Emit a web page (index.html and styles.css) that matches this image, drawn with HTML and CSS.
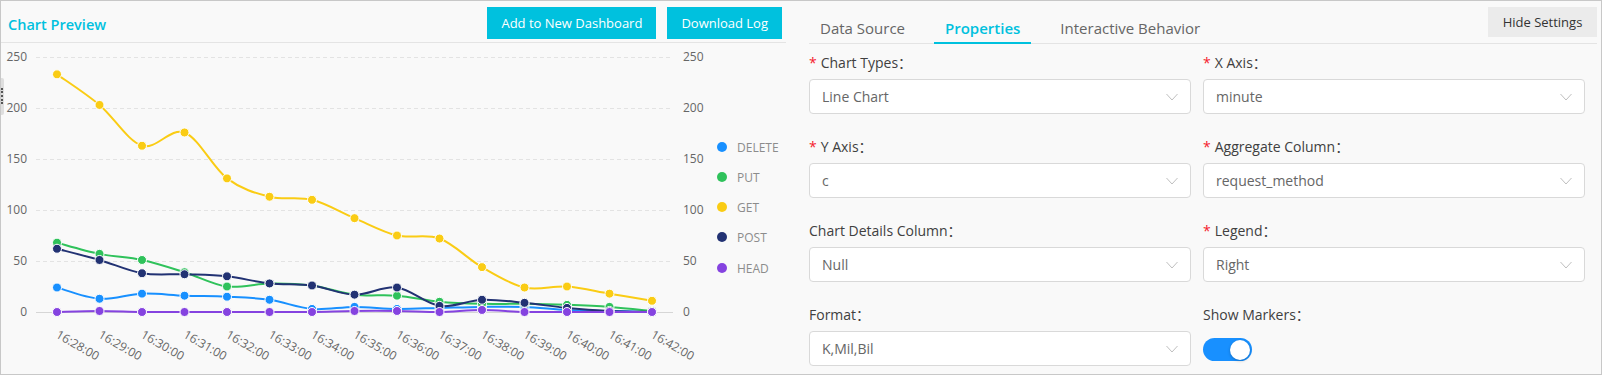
FILE: index.html
```html
<!DOCTYPE html>
<html>
<head>
<meta charset="utf-8">
<link rel="stylesheet" href="styles.css">
</head>
<body>
<div class="frame">
  <section class="preview">
    <header class="preview-head">
      <h2 class="title">Chart Preview</h2>
      <div class="actions">
        <button class="btn primary">Add to New Dashboard</button>
        <button class="btn primary">Download Log</button>
      </div>
    </header>
    <div class="chart">
      <svg class="chart-svg" width="785" height="331" viewBox="1 43 785 331" xmlns="http://www.w3.org/2000/svg">
        <g class="grid">
          <line x1="36" x2="673" y1="57.5" y2="57.5"/>
          <line x1="36" x2="673" y1="108.5" y2="108.5"/>
          <line x1="36" x2="673" y1="159.5" y2="159.5"/>
          <line x1="36" x2="673" y1="210.5" y2="210.5"/>
          <line x1="36" x2="673" y1="261.5" y2="261.5"/>
        </g>
        <line class="zero" x1="36" x2="673" y1="312.5" y2="312.5"/>
        <g class="axis-left">
          <text x="27" y="61">250</text>
          <text x="27" y="112">200</text>
          <text x="27" y="163">150</text>
          <text x="27" y="214">100</text>
          <text x="27" y="265">50</text>
          <text x="27" y="316">0</text>
        </g>
        <g class="axis-right">
          <text x="683" y="61">250</text>
          <text x="683" y="112">200</text>
          <text x="683" y="163">150</text>
          <text x="683" y="214">100</text>
          <text x="683" y="265">50</text>
          <text x="683" y="316">0</text>
        </g>
        <g class="axis-x">
          <text transform="translate(55,337) rotate(30)">16:28:00</text>
          <text transform="translate(97.5,337) rotate(30)">16:29:00</text>
          <text transform="translate(140,337) rotate(30)">16:30:00</text>
          <text transform="translate(182.5,337) rotate(30)">16:31:00</text>
          <text transform="translate(225,337) rotate(30)">16:32:00</text>
          <text transform="translate(267.5,337) rotate(30)">16:33:00</text>
          <text transform="translate(310,337) rotate(30)">16:34:00</text>
          <text transform="translate(352.5,337) rotate(30)">16:35:00</text>
          <text transform="translate(395,337) rotate(30)">16:36:00</text>
          <text transform="translate(437.5,337) rotate(30)">16:37:00</text>
          <text transform="translate(480,337) rotate(30)">16:38:00</text>
          <text transform="translate(522.5,337) rotate(30)">16:39:00</text>
          <text transform="translate(565,337) rotate(30)">16:40:00</text>
          <text transform="translate(607.5,337) rotate(30)">16:41:00</text>
          <text transform="translate(650,337) rotate(30)">16:42:00</text>
        </g>
        <g id="lines"></g>
        <g id="points"></g>
        <g class="legend">
          <circle cx="722" cy="147" r="5" fill="#1890ff"/><text x="737" y="151.5">DELETE</text>
          <circle cx="722" cy="177" r="5" fill="#2fc25b"/><text x="737" y="181.5">PUT</text>
          <circle cx="722" cy="207" r="5" fill="#facc14"/><text x="737" y="211.5">GET</text>
          <circle cx="722" cy="237" r="5" fill="#223273"/><text x="737" y="241.5">POST</text>
          <circle cx="722" cy="268" r="5" fill="#8543e0"/><text x="737" y="272.5">HEAD</text>
        </g>
      </svg>
    </div>
    <div class="drag-handle"></div>
  </section>

  <section class="settings">
    <nav class="tabbar">
      <div class="tab">Data Source</div>
      <div class="tab active">Properties</div>
      <div class="tab">Interactive Behavior</div>
      <button class="btn ghost">Hide Settings</button>
    </nav>
    <form class="form">
      <div class="field">
        <label class="label"><span class="req">*</span>Chart Types：</label>
        <div class="select"><span>Line Chart</span><svg class="chev" width="12" height="8" viewBox="0 0 12 8"><polyline points="0.5,1 6,7 11.5,1"/></svg></div>
      </div>
      <div class="field">
        <label class="label"><span class="req">*</span>X Axis：</label>
        <div class="select"><span>minute</span><svg class="chev" width="12" height="8" viewBox="0 0 12 8"><polyline points="0.5,1 6,7 11.5,1"/></svg></div>
      </div>
      <div class="field">
        <label class="label"><span class="req">*</span>Y Axis：</label>
        <div class="select"><span>c</span><svg class="chev" width="12" height="8" viewBox="0 0 12 8"><polyline points="0.5,1 6,7 11.5,1"/></svg></div>
      </div>
      <div class="field">
        <label class="label"><span class="req">*</span>Aggregate Column：</label>
        <div class="select"><span>request_method</span><svg class="chev" width="12" height="8" viewBox="0 0 12 8"><polyline points="0.5,1 6,7 11.5,1"/></svg></div>
      </div>
      <div class="field">
        <label class="label">Chart Details Column：</label>
        <div class="select"><span>Null</span><svg class="chev" width="12" height="8" viewBox="0 0 12 8"><polyline points="0.5,1 6,7 11.5,1"/></svg></div>
      </div>
      <div class="field">
        <label class="label"><span class="req">*</span>Legend：</label>
        <div class="select"><span>Right</span><svg class="chev" width="12" height="8" viewBox="0 0 12 8"><polyline points="0.5,1 6,7 11.5,1"/></svg></div>
      </div>
      <div class="field">
        <label class="label">Format：</label>
        <div class="select"><span>K,Mil,Bil</span><svg class="chev" width="12" height="8" viewBox="0 0 12 8"><polyline points="0.5,1 6,7 11.5,1"/></svg></div>
      </div>
      <div class="field">
        <label class="label">Show Markers：</label>
        <div class="switch on"></div>
      </div>
    </form>
  </section>
</div>
<script src="script.js"></script>
</body>
</html>
```

FILE: styles.css
```css
* { box-sizing: border-box; }
html, body { margin: 0; padding: 0; }
body {
  font-family: "Open Sans", "Noto Sans CJK SC", sans-serif;
  background: #ffffff;
}
.frame {
  width: 1602px;
  height: 375px;
  border: 1px solid #c8c8c8;
  background: #f9f9f9;
  display: flex;
  position: relative;
  overflow: hidden;
}

/* ---------- preview ---------- */
.preview {
  width: 785px;
  flex: none;
  display: flex;
  flex-direction: column;
  position: relative;
}
.preview-head {
  height: 42px;
  border-bottom: 1px solid #e4e4e4;
  display: flex;
  justify-content: space-between;
  align-items: flex-start;
  padding: 6px 4px 0 7px;
}
.title {
  margin: 8px 0 0;
  font-size: 14.5px;
  line-height: 20px;
  font-weight: 600;
  color: #00c1de;
}
.actions { display: flex; gap: 11px; }
.btn {
  font-family: inherit;
  border: none;
  cursor: pointer;
}
.btn.primary {
  height: 32px;
  padding: 0 14px;
  background: #00c1de;
  color: #fff;
  font-size: 13px;
}
.chart { flex: 1; }
.chart-svg { display: block; font-family: "Open Sans", sans-serif; }
.grid line { stroke: #e3e3e3; stroke-width: 1; stroke-dasharray: 4 3; }
.zero { stroke: #d6d6d6; stroke-width: 1; }
.axis-left text { font-size: 12px; fill: #666; text-anchor: end; }
.axis-right text { font-size: 12px; fill: #666; text-anchor: start; }
.axis-x text { font-size: 12px; fill: #666; }
.legend text { font-size: 12px; fill: #8c8c8c; }
.drag-handle {
  position: absolute;
  left: -1px;
  top: 77px;
  width: 4px;
  height: 37px;
  background: #dedede;
  border-radius: 0 2px 2px 0;
}
.drag-handle::before {
  content: "";
  position: absolute;
  left: 1px;
  top: 10px;
  height: 16px;
  border-left: 2px dotted #555;
}

/* ---------- settings ---------- */
.settings {
  flex: 1;
  padding: 0 4px 0 23px;
  display: flex;
  flex-direction: column;
}
.tabbar {
  height: 43px;
  border-bottom: 1px solid #e4e4e4;
  display: flex;
  align-items: stretch;
}
.tab {
  position: relative;
  padding: 17px 11px 0;
  margin-right: 18px;
  font-size: 15px;
  line-height: 20px;
  color: #666;
}
.tab.active { color: #00c1de; font-weight: 600; }
.tab.active::after {
  content: "";
  position: absolute;
  left: 0;
  right: 0;
  bottom: -1px;
  height: 2px;
  background: #00c1de;
}
.btn.ghost {
  margin-left: auto;
  margin-right: 0;
  margin-top: 6px;
  align-self: flex-start;
  width: 109px;
  height: 30px;
  padding: 0;
  background: #ebebeb;
  color: #333;
  font-size: 13px;
}

.form {
  display: grid;
  grid-template-columns: 1fr 1fr;
  column-gap: 12px;
  row-gap: 22px;
  padding: 8px 12px 0 0;
}
.field { display: flex; flex-direction: column; }
.label {
  font-size: 14px;
  line-height: 22px;
  color: #404040;
  margin-bottom: 5px;
}
.req { color: #f5222d; margin-right: 4px; }
.select {
  height: 35px;
  border: 1px solid #d9d9d9;
  border-radius: 4px;
  background: #fff;
  display: flex;
  align-items: center;
  justify-content: space-between;
  padding: 0 12px;
  font-size: 14px;
  color: #666;
}
.chev { display: block; }
.chev polyline { fill: none; stroke: #bfbfbf; stroke-width: 1; }
.switch {
  position: relative;
  width: 49px;
  height: 23px;
  margin-top: 7px;
  border-radius: 12px;
  background: #1890ff;
}
.switch::after {
  content: "";
  position: absolute;
  top: 1.5px;
  right: 2px;
  width: 20px;
  height: 20px;
  border-radius: 50%;
  background: #fff;
  box-shadow: 0 1px 3px rgba(0, 0, 0, 0.25);
}
```

FILE: script.js
```js
(function () {
  var NS = "http://www.w3.org/2000/svg";
  function xs(i) { return 57 + 42.5 * i; }
  function ys(v) { return 312 - v * 1.02; }
  var series = [
    { c: "#1890ff", d: [24, 13, 18, 16, 15, 12, 3, 5, 3, 4, 5, 5, 2, 1, 0] },
    { c: "#2fc25b", d: [68, 57, 51, 39, 25, 28, 26, 17, 16, 10, 8, 8, 7, 5, 1] },
    { c: "#facc14", d: [233, 203, 163, 176, 131, 113, 110, 92, 75, 72, 44, 24, 25, 18, 11] },
    { c: "#223273", d: [62, 51, 38, 37, 35, 28, 26, 17, 24, 6, 12, 9, 4, 1, 0] },
    { c: "#8543e0", d: [0, 1, 0, 0, 0, 0, 0, 1, 1, 0, 2, 0, 0, 0, 0] }
  ];
  var lines = document.getElementById("lines");
  var points = document.getElementById("points");
  series.forEach(function (s) {
    var p = s.d.map(function (v, i) { return [xs(i), ys(v)]; });
    var d = "M" + p[0][0] + "," + p[0][1];
    for (var i = 0; i < p.length - 1; i++) {
      var p0 = p[i - 1] || p[i], p1 = p[i], p2 = p[i + 1], p3 = p[i + 2] || p2;
      var c1x = p1[0] + (p2[0] - p0[0]) / 6, c1y = Math.min(312, p1[1] + (p2[1] - p0[1]) / 6);
      var c2x = p2[0] - (p3[0] - p1[0]) / 6, c2y = Math.min(312, p2[1] - (p3[1] - p1[1]) / 6);
      d += " C" + c1x.toFixed(2) + "," + c1y.toFixed(2) + " " + c2x.toFixed(2) + "," + c2y.toFixed(2) + " " + p2[0] + "," + p2[1].toFixed(2);
    }
    var path = document.createElementNS(NS, "path");
    path.setAttribute("d", d);
    path.setAttribute("fill", "none");
    path.setAttribute("stroke", s.c);
    path.setAttribute("stroke-width", "2");
    lines.appendChild(path);
  });
  series.forEach(function (s) {
    s.d.forEach(function (v, i) {
      var c = document.createElementNS(NS, "circle");
      c.setAttribute("cx", xs(i));
      c.setAttribute("cy", ys(v));
      c.setAttribute("r", "4.5");
      c.setAttribute("fill", s.c);
      c.setAttribute("stroke", "#fff");
      c.setAttribute("stroke-width", "1");
      points.appendChild(c);
    });
  });
})();
```
